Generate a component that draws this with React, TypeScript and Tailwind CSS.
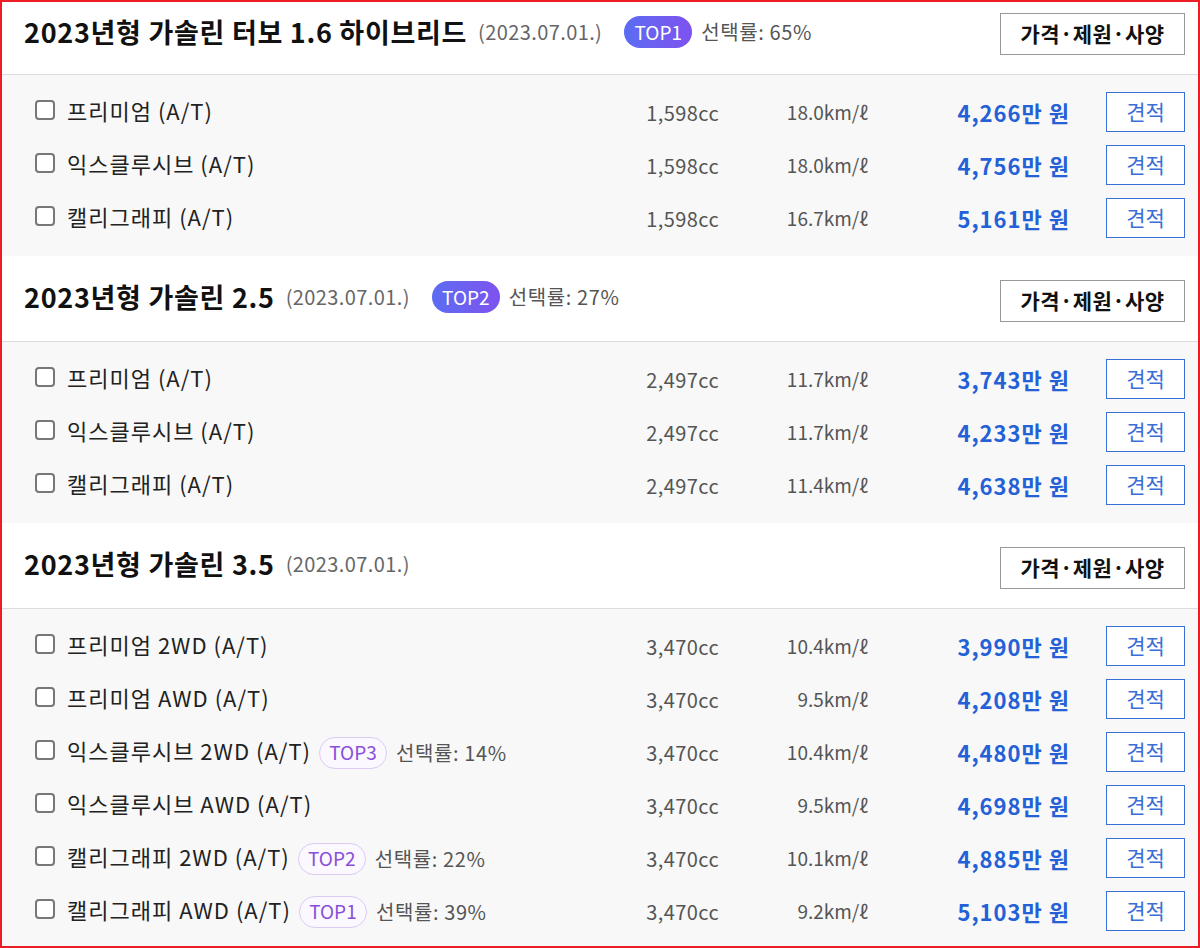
import React from 'react'

interface Trim {
  name: string
  cc: string
  eff: string
  price: string
  top?: string
  rate?: string
}

interface Group {
  title: string
  date: string
  top?: string
  rate?: string
  first?: boolean
  trims: Trim[]
}

const groups: Group[] = [
  {
    title: '2023년형 가솔린 터보 1.6 하이브리드',
    date: '(2023.07.01.)',
    top: 'TOP1',
    rate: '65%',
    first: true,
    trims: [
      { name: '프리미엄 (A/T)', cc: '1,598cc', eff: '18.0km/ℓ', price: '4,266' },
      { name: '익스클루시브 (A/T)', cc: '1,598cc', eff: '18.0km/ℓ', price: '4,756' },
      { name: '캘리그래피 (A/T)', cc: '1,598cc', eff: '16.7km/ℓ', price: '5,161' }
    ]
  },
  {
    title: '2023년형 가솔린 2.5',
    date: '(2023.07.01.)',
    top: 'TOP2',
    rate: '27%',
    trims: [
      { name: '프리미엄 (A/T)', cc: '2,497cc', eff: '11.7km/ℓ', price: '3,743' },
      { name: '익스클루시브 (A/T)', cc: '2,497cc', eff: '11.7km/ℓ', price: '4,233' },
      { name: '캘리그래피 (A/T)', cc: '2,497cc', eff: '11.4km/ℓ', price: '4,638' }
    ]
  },
  {
    title: '2023년형 가솔린 3.5',
    date: '(2023.07.01.)',
    trims: [
      { name: '프리미엄 2WD (A/T)', cc: '3,470cc', eff: '10.4km/ℓ', price: '3,990' },
      { name: '프리미엄 AWD (A/T)', cc: '3,470cc', eff: '9.5km/ℓ', price: '4,208' },
      { name: '익스클루시브 2WD (A/T)', cc: '3,470cc', eff: '10.4km/ℓ', price: '4,480', top: 'TOP3', rate: '14%' },
      { name: '익스클루시브 AWD (A/T)', cc: '3,470cc', eff: '9.5km/ℓ', price: '4,698' },
      { name: '캘리그래피 2WD (A/T)', cc: '3,470cc', eff: '10.1km/ℓ', price: '4,885', top: 'TOP2', rate: '22%' },
      { name: '캘리그래피 AWD (A/T)', cc: '3,470cc', eff: '9.2km/ℓ', price: '5,103', top: 'TOP1', rate: '39%' }
    ]
  }
]

function TrimRow({ trim }: { trim: Trim }) {
  return (
    <div className="flex items-center h-[53px] pl-[33px] pr-[13px]">
      <div className="flex-1 flex items-center">
        <span className="w-[20px] h-[20px] border-2 border-[#777] rounded-[4px] bg-white mr-[12px] -mt-[6px]" />
        <span className="text-[22px] tracking-[1px] text-[#222] -mt-[5px]">{trim.name}</span>
        {trim.top && (
          <>
            <span className="ml-[8px] h-[32px] w-[68px] flex items-center justify-center rounded-full border border-[#dccbf5] bg-[#fbf8ff] text-[19px] text-[#8a4fd8]">
              {trim.top}
            </span>
            <span className="ml-[9px] text-[20px] tracking-[0.6px] text-[#555]">선택률: {trim.rate}</span>
          </>
        )}
      </div>
      <span className="w-[120px] text-right text-[20px] tracking-[0.4px] text-[#555]">{trim.cc}</span>
      <span className="w-[149px] text-right text-[19px] text-[#555]">{trim.eff}</span>
      <span className="w-[202px] text-right text-[22px] tracking-[1px] font-bold text-[#2460d6]">{trim.price}만 원</span>
      <button className="ml-[36px] w-[79px] h-[40px] border border-[#3a6fd8] bg-white text-[21px] text-[#3a6fd8] -mt-[2px]">
        견적
      </button>
    </div>
  )
}

export default function App() {
  return (
    <div
      className="w-[1200px] h-[948px] border-2 border-[#ee1c25] bg-white overflow-hidden"
      style={{ fontFamily: '"Noto Sans CJK KR", "Noto Sans", sans-serif' }}
    >
      {groups.map((g, i) => (
        <div key={i}>
          <div className={`flex items-center pl-[22px] pr-[13px] border-b border-[#dcdcdc] ${g.first ? 'h-[75px] -mt-[2px] pb-[6px]' : 'h-[86px]'}`}>
            <span className={`text-[27px] tracking-[0.7px] font-bold text-[#111] ${g.first ? '-mt-[4px]' : '-mt-[3px]'}`}>{g.title}</span>
            <span className={`ml-[11px] text-[20px] tracking-[0.4px] text-[#666] ${g.first ? '-mt-[4px]' : '-mt-[3px]'}`}>{g.date}</span>
            {g.top && (
              <>
                <span className={`ml-[22px] h-[32px] w-[68px] flex items-center justify-center rounded-full bg-gradient-to-r from-[#5a6cf2] to-[#7d52ef] text-[19px] text-white ${g.first ? '-mt-[4px]' : '-mt-[3px]'}`}>
                  {g.top}
                </span>
                <span className={`ml-[9px] text-[20px] tracking-[0.6px] text-[#555] ${g.first ? '-mt-[4px]' : '-mt-[3px]'}`}>선택률: {g.rate}</span>
              </>
            )}
            <div className="flex-1" />
            <button className={`w-[185px] h-[42px] border border-[#999] bg-white text-[21px] tracking-[0.4px] font-bold text-[#111] ${g.first ? 'mt-0' : 'mt-[4px]'}`}>
              가격·제원·사양
            </button>
          </div>
          <div className="bg-[#f8f8f8] py-[11px]">
            {g.trims.map((t, j) => (
              <TrimRow key={j} trim={t} />
            ))}
          </div>
        </div>
      ))}
    </div>
  )
}
